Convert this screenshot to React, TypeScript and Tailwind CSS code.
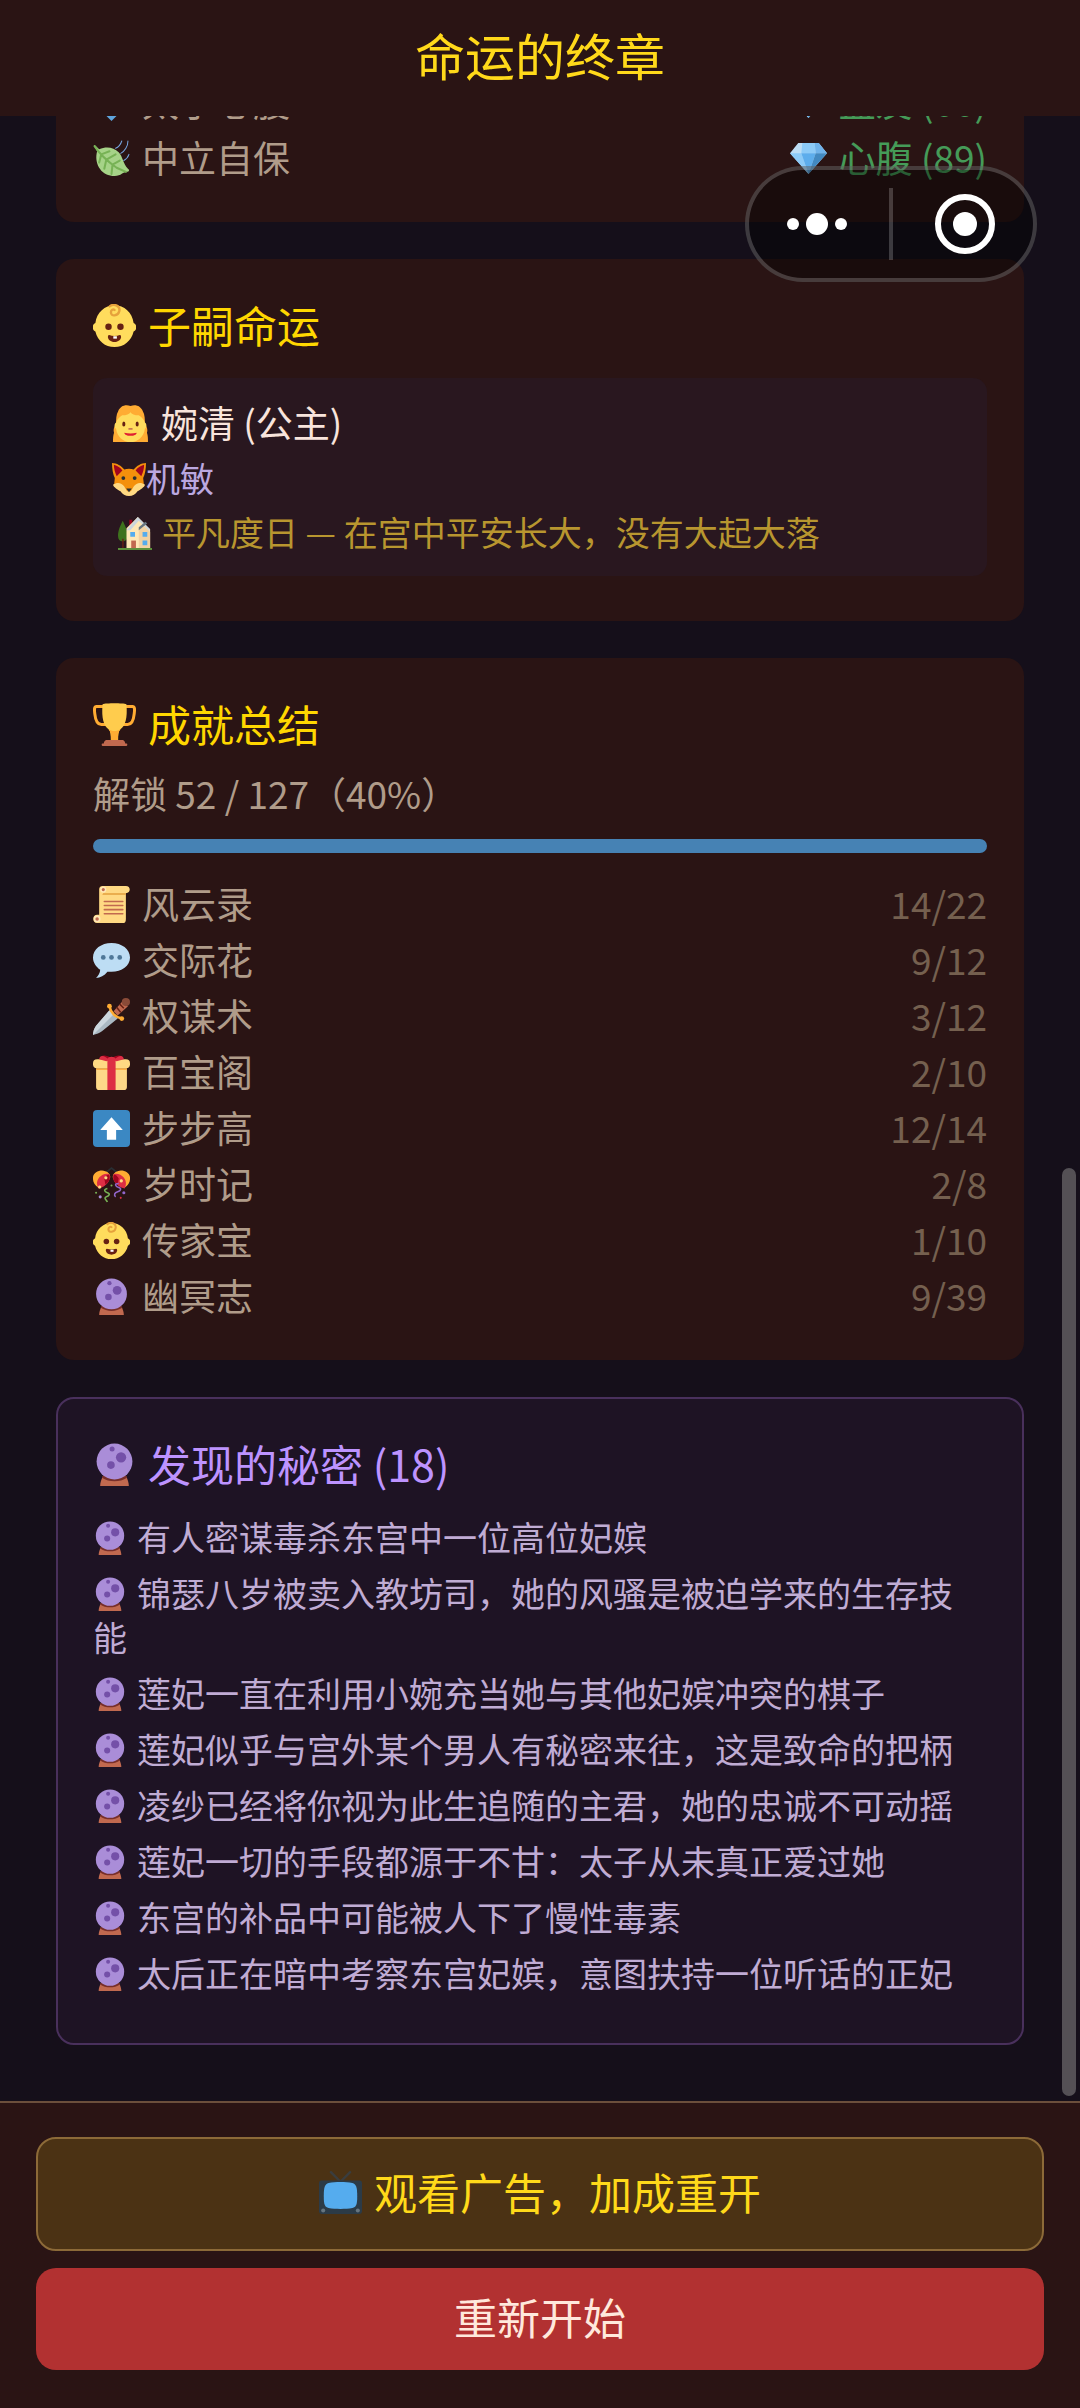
import type { ReactNode } from "react";

type IconName =
  | "diamond"
  | "leaf"
  | "gem"
  | "baby"
  | "girl"
  | "fox"
  | "house"
  | "trophy"
  | "scroll"
  | "speech"
  | "dagger"
  | "gift"
  | "up"
  | "confetti"
  | "crystal"
  | "tv";

const ICONS: Record<IconName, ReactNode> = {
  diamond: <path fill="#5fa5de" d="M18 0 36 18 18 36 0 18Z" />,
  leaf: (
    <>
      <path
        fill="#a6d388"
        d="M2 7C0 6 1 4 3 6l3 3c7-3 14-2 19 3 4 4 4 11 9 16 2 1 1 3-1 3-4 0-6 5-14 4C7 34 1 22 4 11Z"
      />
      <path
        fill="none"
        stroke="#77b255"
        strokeWidth="2"
        strokeLinecap="round"
        d="M1.500 6C6 13 13 20 23 27l9 4M8 14l8-3M13 19l9-5M19 24l7-4M8 14l-2 8M13 19l-2 9M19 24l-1 9"
      />
      <path fill="none" stroke="#77a5e0" strokeWidth="1" strokeLinecap="round" d="M22 8c3-1 5-4 6-7M27 13c4-2 7-7 7-12M30 20c2-1 4-3 5-6" />
    </>
  ),
  gem: (
    <>
      <path fill="#bdddf4" d="M8 3h20l8 10-18 20L0 13Z" />
      <path fill="#8ccaf7" d="M12 3h12l1 10H11Z" />
      <path fill="#6fb2ea" d="M28 3l8 10H25l-1-10Z" />
      <path fill="#8ccaf7" d="M0 13h11l7 20Z" />
      <path fill="#5dadec" d="M11 13h14l-7 20Z" />
      <path fill="#4289c1" d="M25 13h11L18 33Z" />
    </>
  ),
  baby: (
    <>
      <path
        fill="#ffdc5d"
        d="M34 16c-1-9-8-15-16-15S3 7 2 16c-3 1-3 6 0 7 2 8 8 13 16 13s14-5 16-13c3-1 3-6 0-7Z"
      />
      <path
        fill="none"
        stroke="#e6a23c"
        strokeWidth="2"
        strokeLinecap="round"
        d="M14 2c4-3 9 0 8 4s-7 5-7 1c0-2 2-3 3-2"
      />
      <circle cx="13" cy="19" r="2.700" fill="#662113" />
      <circle cx="23" cy="19" r="2.700" fill="#662113" />
      <path fill="#662113" d="M13.500 26c3 1 6 1 9 0 1 0 1 1 1 2-1 5-10 5-11 0 0-1 0-2 1-2Z" />
      <path fill="#fff" d="M17 27h3v2h-3Z" />
    </>
  ),
  girl: (
    <>
      <path fill="#ffac33" d="M18 1c5-2 10 0 12 5 2 3 2 8 2 13 2 2 3 5 2 8 1 3 1 6 1 9H1c0-3 0-6 1-9-1-3 0-6 2-8 0-5 0-10 2-13C8 1 13-1 18 1Z" />
      <path fill="#ffdc5d" d="M4 17c1-3 3-5 6-7 4 0 7-1 8-3 1 2 4 3 8 3 3 2 5 4 6 7 2 1 2 5 0 6-1 8-7 13-14 13S5 31 4 23c-2-1-2-5 0-6Z" />
      <ellipse cx="11.500" cy="18.500" rx="1.500" ry="2.500" fill="#662113" />
      <ellipse cx="24.500" cy="18.500" rx="1.500" ry="2.500" fill="#662113" />
      <path fill="#c1694f" d="M16 22.500h4V24h-4Z" />
      <path fill="#df1f32" d="M12 27c4 1 8 1 12 0 0 4-12 4-12 0Z" />
    </>
  ),
  fox: (
    <>
      <path fill="#f4900c" d="M0 1C5 1 10 4 13 8c3-1 7-1 10 0 3-4 8-7 13-7 0 6-1 12-3 16l1 9c-4 1-6 3-8 5-2 3-5 4-8 4s-6-1-8-4c-2-2-4-4-8-5l1-9C1 13 0 7 0 1Z" />
      <path fill="#a0041e" d="M2 3c4 1 7 3 9 6l-6 6C3 11 2 7 2 3ZM34 3c-4 1-7 3-9 6l6 6c2-4 3-8 3-12Z" />
      <path fill="#ffd983" d="M1 24c5-3 9-2 12 2l3 5h4l3-5c3-4 7-5 12-2-1 3-5 5-8 7-2 3-5 5-9 5s-7-2-9-5c-3-2-7-4-8-7Z" />
      <circle cx="12" cy="17" r="2" fill="#292f33" />
      <circle cx="24" cy="17" r="2" fill="#292f33" />
      <path fill="#292f33" d="M15 28h6l-3 4Z" />
    </>
  ),
  house: (
    <>
      <path fill="#5c913b" d="M0 34h36v2H0Z" />
      <path fill="#3e721d" d="M5 5C3 9 0 15 0 21c0 4 2 6 5 6s5-2 5-6c0-6-3-12-5-16Z" />
      <path fill="#662113" d="M4.500 24h1.500v10H4.500Z" />
      <path fill="#a0041e" d="M12 4h3v8h-3Z" />
      <path fill="#ffe8b6" d="M21 1 9 13v21h25V14Z" />
      <path fill="#ccd6dd" d="M21 1 34 14l-1 2L22 5l-9 10-4 0Z" />
      <path fill="#f3d2a2" d="M22 14v20h12V17l-6-6Z" />
      <path fill="#66757f" d="m22 12 7-6 2 2-9 7Z" />
      <path fill="#55acee" d="M13 17h5v5h-5ZM26 17h5v5h-5ZM26 26h5v5h-5Z" />
      <path fill="#c1694f" d="M14 26h5v8h-5Z" />
    </>
  ),
  trophy: (
    <>
      <path
        fill="none"
        stroke="#ffac33"
        strokeWidth="2.500"
        d="M9 3H3C1 3 1 5 1.500 9c.5 5 1.500 9 5.500 9h6M27 3h6c2 0 2 2 1.500 6-.5 5-1.500 9-5.500 9h-6"
      />
      <path fill="#ffcc4d" d="M8 1c3-1 17-1 20 0 1 12-1 18-5 21-2 2-2 5-2 9h-6c0-4 0-7-2-9C9 19 7 13 8 1Z" />
      <path fill="#ffac33" d="M13 22c3 2 7 2 10 0-2 2-2 5-2 9h-6c0-4 0-7-2-9Z" />
      <path fill="#c1694f" d="M11 31h14c1 0 2 2 2 3h1c1 0 1 2 0 2H8c-1 0-1-2 0-2h1c0-1 1-3 2-3Z" />
    </>
  ),
  scroll: (
    <>
      <path fill="#ffd983" d="M10 0h22c5 0 5 7 0 7v25c0 3-1 4-3 4H4c-5 0-5-8 0-8h2V4c0-3 1-4 4-4Z" />
      <path fill="#e39f3d" d="M10 7h22v1.500H9Z" />
      <circle cx="10" cy="3.500" r="3" fill="#ffe8b6" />
      <circle cx="10" cy="3.500" r="1.500" fill="#c1694f" />
      <circle cx="4" cy="32" r="3.300" fill="#ffe8b6" />
      <circle cx="4" cy="32" r="1.700" fill="#c1694f" />
      <path stroke="#c1694f" strokeWidth="1.500" strokeLinecap="round" d="M11 15h18M11 19h18M11 23h18M11 27h18" />
    </>
  ),
  speech: (
    <>
      <path fill="#bdddf4" d="M18 1c10 0 18 6 18 14s-8 14-18 14h-4c-3 4-7 6-11 6 2-2 4-5 4-8-4-3-7-7-7-12C0 7 8 1 18 1Z" />
      <circle cx="10" cy="15" r="2.300" fill="#4f7898" />
      <circle cx="18" cy="15" r="2.300" fill="#4f7898" />
      <circle cx="26" cy="15" r="2.300" fill="#4f7898" />
    </>
  ),
  dagger: (
    <>
      <path fill="#aab8c2" d="M16 12 3 27c-2 3-3 6-3 9 3-1 7-2 9-4l15-12Z" />
      <path fill="#ccd6dd" d="M16 12 3 27c-2 3-3 6-3 9l20-20Z" />
      <path fill="#c1694f" d="m20 13 9-10 5 5-10 9Z" />
      <path stroke="#662113" strokeWidth="1.500" d="m23 9 4 5M26 6l4 4" />
      <circle cx="32" cy="4" r="4" fill="#8a4b38" />
      <path fill="none" stroke="#ffac33" strokeWidth="2.500" strokeLinecap="round" d="M16 8c1 6 6 11 12 12" />
      <circle cx="16" cy="8" r="2.300" fill="#ffac33" />
      <circle cx="28" cy="20" r="2.300" fill="#ffac33" />
    </>
  ),
  gift: (
    <>
      <path fill="#a0041e" d="M6 5c2-5 7-4 12-1 5-3 10-4 12 1Z" />
      <path fill="#fdd888" d="M3 14h30v18c0 2-1 3-3 3H6c-2 0-3-1-3-3Z" />
      <rect width="36" height="9" y="5" rx="4" fill="#ffd983" />
      <path fill="#fcab40" d="M3 14h30v1.500H3Z" />
      <path fill="#dd2e44" d="M14 5c1-3 7-3 8 0v30h-8Z" />
      <path fill="#dd2e44" d="M6 5c1-5 6-3 10 1l-3 1ZM30 5c-1-5-6-3-10 1l3 1Z" />
    </>
  ),
  up: (
    <>
      <rect width="36" height="36" rx="4" fill="#3b88c3" />
      <path fill="#fff" d="M18 7 29 19.500h-6.500V29h-9v-9.500H7Z" />
    </>
  ),
  confetti: (
    <>
      <path fill="none" stroke="#292f33" strokeWidth="1.500" d="M13 6 18 2l5 4" />
      <path fill="#ffac33" d="M0 13C-1 7 6 3 12 5c4 1 6 5 4 8L5 21c-3-2-5-5-5-8ZM36 13c1-6-6-10-12-8-4 1-6 5-4 8l11 8c3-2 5-5 5-8Z" />
      <path fill="#dd2e44" d="M4 18C3 13 9 6 16 8c2 6-3 12-11 14ZM32 18c1-5-5-12-12-10-2 6 3 12 11 14Z" />
      <path fill="#a0041e" d="M11 12c2-3 4-4 5-3 1 4-1 7-4 9ZM25 12c-2-3-4-4-5-3-1 4 1 7 4 9Z" />
      <path fill="#ffd983" d="M11 11a1.500 1.500 0 1 1 3 1 1.500 1.500 0 0 1-3-1ZM26 14a1.500 1.500 0 1 1 3 1 1.500 1.500 0 0 1-3-1ZM5 20a1.500 1.500 0 1 1 3 1 1.500 1.500 0 0 1-3-1Z" />
      <path fill="none" stroke="#77b255" strokeWidth="1.500" d="M14 22c-4 1-3 3 0 4s2 3-1 4 0 3 1 5" />
      <path fill="none" stroke="#9266cc" strokeWidth="1.500" d="M25 17c-5 0-3 3 0 4s2 3-1 4-4 3-2 5" />
      <circle cx="7" cy="30" r="1.500" fill="#aa8dd8" />
      <circle cx="30" cy="26" r="1.500" fill="#9266cc" />
      <circle cx="18" cy="19" r="1" fill="#77b255" />
      <circle cx="3" cy="26" r="1" fill="#77b255" />
      <circle cx="27" cy="31" r="1" fill="#dd2e44" />
    </>
  ),
  crystal: (
    <>
      <path fill="#c1694f" d="M8 28h20c1 3 2 5 2 8H6c0-3 1-5 2-8Z" />
      <path fill="#782f2a" d="M7.500 29c6 4 15 4 21 0l-1-2H8.500Z" />
      <circle cx="18" cy="15.500" r="15" fill="#aa8dd8" />
      <circle cx="23.500" cy="12" r="4.300" fill="#7450a8" />
      <circle cx="15" cy="18.500" r="3.200" fill="#7450a8" />
      <circle cx="16" cy="5" r="2.100" fill="#7450a8" />
    </>
  ),
  tv: (
    <>
      <path stroke="#3a3d3e" strokeWidth="2" strokeLinecap="round" d="m10 1 8 8 8-8" />
      <rect width="36" height="28" y="8" rx="2" fill="#2c3b47" />
      <path fill="#55acee" d="M8 10c6-1 14-1 20 0 3 1 4 3 4 11s-1 9-4 10c-6 1-14 1-20 0-3-1-4-2-4-10S5 11 8 10Z" />
      <circle cx="3.500" cy="33" r="1.700" fill="#66757f" />
      <circle cx="32.500" cy="33" r="1.700" fill="#66757f" />
    </>
  ),
};

function Emoji({ name, className = "mr-[12px]" }: { name: IconName; className?: string }) {
  return (
    <svg
      viewBox="0 0 36 36"
      fill="none"
      aria-hidden="true"
      className={`inline-block h-[1em] w-[1em] align-[-4px] ${className}`}
    >
      {ICONS[name]}
    </svg>
  );
}

const FACTIONS: { icon: IconName; name: string; relIcon: IconName; rel: string }[] = [
  { icon: "diamond", name: "太子心腹", relIcon: "gem", rel: "盟友 (66)" },
  { icon: "leaf", name: "中立自保", relIcon: "gem", rel: "心腹 (89)" },
];

const ACHIEVEMENTS: { icon: IconName; name: string; count: string }[] = [
  { icon: "scroll", name: "风云录", count: "14/22" },
  { icon: "speech", name: "交际花", count: "9/12" },
  { icon: "dagger", name: "权谋术", count: "3/12" },
  { icon: "gift", name: "百宝阁", count: "2/10" },
  { icon: "up", name: "步步高", count: "12/14" },
  { icon: "confetti", name: "岁时记", count: "2/8" },
  { icon: "baby", name: "传家宝", count: "1/10" },
  { icon: "crystal", name: "幽冥志", count: "9/39" },
];

const SECRETS = [
  "有人密谋毒杀东宫中一位高位妃嫔",
  "锦瑟八岁被卖入教坊司，她的风骚是被迫学来的生存技能",
  "莲妃一直在利用小婉充当她与其他妃嫔冲突的棋子",
  "莲妃似乎与宫外某个男人有秘密来往，这是致命的把柄",
  "凌纱已经将你视为此生追随的主君，她的忠诚不可动摇",
  "莲妃一切的手段都源于不甘：太子从未真正爱过她",
  "东宫的补品中可能被人下了慢性毒素",
  "太后正在暗中考察东宫妃嫔，意图扶持一位听话的正妃",
];

function Card({ children }: { children: ReactNode }) {
  return <section className="rounded-[18px] bg-[#2a1414] p-[37px]">{children}</section>;
}

function CardTitle({ icon, children }: { icon: IconName; children: ReactNode }) {
  return (
    <h2 className="pb-1 text-[43px] leading-[56px] text-[#ffd700]">
      <Emoji name={icon} />
      {children}
    </h2>
  );
}

function Capsule() {
  return (
    <div className="absolute top-[166px] right-[43px] flex h-[116px] w-[292px] items-center rounded-full border-4 border-white/20 bg-black/40">
      <button type="button" aria-label="更多" className="flex flex-1 items-center justify-center gap-[7px] pr-1">
        <span className="size-[12px] rounded-full bg-white" />
        <span className="size-[22px] rounded-full bg-white" />
        <span className="size-[12px] rounded-full bg-white" />
      </button>
      <span className="h-[72px] w-[4px] bg-white/20" />
      <button type="button" aria-label="关闭" className="flex flex-1 items-center justify-center pl-1">
        <span className="flex size-[60px] items-center justify-center rounded-full border-6 border-white">
          <span className="size-[24px] rounded-full bg-white" />
        </span>
      </button>
    </div>
  );
}

export default function App() {
  return (
    <div className="relative flex h-screen flex-col bg-[#150f1a] font-['Noto_Sans_CJK_SC',sans-serif]">
      <header className="shrink-0 bg-[#2a1414] pt-[18px] pb-[26px] text-center">
        <h1 className="text-[50px] leading-[72px] text-[#ffd91a]">命运的终章</h1>
      </header>

      <main className="relative flex min-h-0 flex-1 flex-col justify-end gap-[37px] overflow-hidden px-14 pb-14">
        <Card>
          <dl className="text-[37px] leading-[56px]">
            {FACTIONS.map((f) => (
              <div key={f.name} className="flex justify-between">
                <dt className="text-[#b09c8a]">
                  <Emoji name={f.icon} />
                  {f.name}
                </dt>
                <dd className="text-[#459b58]">
                  <Emoji name={f.relIcon} />
                  {f.rel}
                </dd>
              </div>
            ))}
          </dl>
        </Card>

        <Card>
          <CardTitle icon="baby">子嗣命运</CardTitle>
          <div className="mt-[22px] mb-2 rounded-[14px] bg-[#29171f] px-[19px] pt-[16px] pb-[18px]">
            <p className="text-[37px] leading-[56px] text-[#f8e4dc]">
              <Emoji name="girl" />
              婉清 (公主)
            </p>
            <p className="text-[34px] leading-[56px] text-[#bba8e0]">
              <Emoji name="fox" className="" />
              机敏
            </p>
            <p className="pl-[6px] text-[34px] leading-[52px] text-[#b8962f]">
              <Emoji name="house" className="mr-[10px]" />
              平凡度日 — 在宫中平安长大，没有大起大落
            </p>
          </div>
        </Card>

        <Card>
          <CardTitle icon="trophy">成就总结</CardTitle>
          <p className="mt-[10px] text-[37px] leading-[56px] text-[#b09c8a]">解锁 52 / 127（40%）</p>
          <div className="mt-[18px] h-[14px] rounded-full bg-[#4682b4]" />
          <dl className="mt-[22px] text-[37px] leading-[56px]">
            {ACHIEVEMENTS.map((a) => (
              <div key={a.name} className="flex justify-between">
                <dt className="text-[#b09c8a]">
                  <Emoji name={a.icon} />
                  {a.name}
                </dt>
                <dd className="text-[#75604f]">{a.count}</dd>
              </div>
            ))}
          </dl>
        </Card>

        <section className="rounded-[18px] border-2 border-[#49305c] bg-[#1e1324] pt-[34px] pr-[37px] pb-[36px] pl-[35px]">
          <h2 className="text-[43px] leading-[60px] text-[#bd93ff]">
            <Emoji name="crystal" />
            发现的秘密 (18)
          </h2>
          <ul className="mt-[22px] text-[34px] leading-[44px] text-[#c0acd4]">
            {SECRETS.map((s) => (
              <li key={s} className="mb-3">
                <Emoji name="crystal" className="mr-[10px]" />
                {s}
              </li>
            ))}
          </ul>
        </section>

        <div className="absolute right-[4px] bottom-[5px] h-[928px] w-[14px] rounded-full bg-[#545055]" />
      </main>

      <footer className="flex shrink-0 flex-col gap-[17px] border-t-2 border-[#6b4f3c] bg-[#2a1414] px-9 pt-[34px] pb-[38px] text-[43px] leading-[60px]">
        <button type="button" className="rounded-[20px] border-2 border-[#8c6a38] bg-[#4b3214] pt-[22px] pb-[28px] text-[#ffd91a]">
          <Emoji name="tv" />
          观看广告，加成重开
        </button>
        <button type="button" className="rounded-[20px] bg-[#b23131] pt-[18px] pb-[24px] text-[#ffe8dc]">
          重新开始
        </button>
      </footer>

      <Capsule />
    </div>
  );
}
